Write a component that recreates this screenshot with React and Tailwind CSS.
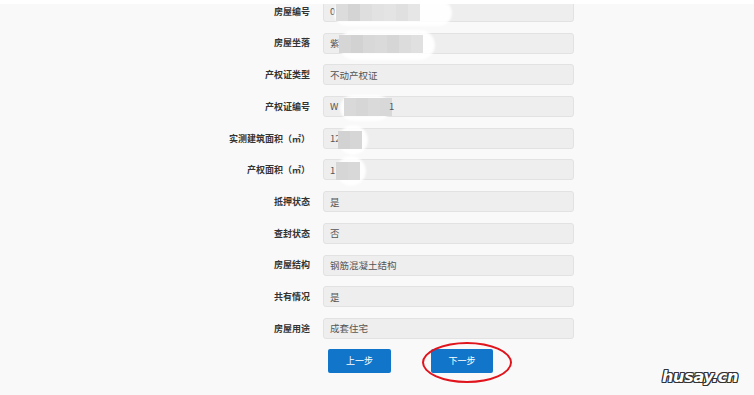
import React from 'react';

const cjk = { fontFamily: '"Noto Sans CJK SC", "Noto Sans", sans-serif' };

// grey mosaic used for blurred-out values
const Mosaic = ({ left, top, cells, blob }) => (
  <>
    {blob && (
      <span
        className="absolute rounded-full bg-white/90 blur-[1px]"
        style={{ left: blob[0], top: blob[1], width: blob[2], height: blob[3] }}
      />
    )}
    <span className="absolute flex" style={{ left, top }}>
      {cells.map((c, i) => (
        <span key={i} className="h-[18px] w-[12px]" style={{ background: c }} />
      ))}
    </span>
  </>
);

const rows = [
  {
    label: '房屋编号',
    value: '0',
    mosaic: { left: 12, top: 1, cells: ['#dcdcdc', '#d4d4d4', '#dedede', '#e2e2e2', '#e4e4e4', '#e0e0e0', '#e6e6e6'], blob: [10, -2, 118, 26] },
  },
  {
    label: '房屋坐落',
    value: '紫',
    mosaic: { left: 15, top: 1, cells: ['#d6d6d6', '#d2d2d2', '#d8d8d8', '#dadada', '#d6d6d6', '#dcdcdc', '#e0e0e0'], blob: [15, -4, 96, 30] },
  },
  { label: '产权证类型', value: '不动产权证' },
  {
    label: '产权证编号',
    value: 'W',
    tail: '1',
    mosaic: { left: 20, top: 1, cells: ['#d9d9d9', '#d6d6d6', '#dadada', '#d8d8d8'], blob: [16, -2, 50, 26] },
  },
  {
    label: '实测建筑面积（㎡）',
    value: '12',
    mosaic: { left: 14, top: 2, cells: ['#d2d2d2', '#d6d6d6'], blob: [14, -4, 30, 30] },
  },
  {
    label: '产权面积（㎡）',
    value: '1',
    mosaic: { left: 12, top: 2, cells: ['#d6d6d6', '#d8d8d8'], blob: [12, -4, 30, 30] },
  },
  { label: '抵押状态', value: '是' },
  { label: '查封状态', value: '否' },
  { label: '房屋结构', value: '钢筋混凝土结构' },
  { label: '共有情况', value: '是' },
  { label: '房屋用途', value: '成套住宅' },
];

export default function App() {
  return (
    <div className="relative h-[395px] w-[754px] overflow-hidden bg-[#f9f9f9]" style={cjk}>
      {/* white strip at the top of the crop */}
      <div className="absolute left-0 right-0 top-0 z-10 h-[4px] bg-white" />

      <div className="flex flex-col gap-[10.7px] pt-[1px]">
        {rows.map((r) => (
          <div key={r.label} className="flex h-[21px] items-center">
            <div className="w-[310px] text-right text-[9px] font-bold text-[#333]">{r.label}</div>
            <div className="relative ml-[13px] flex h-[21px] w-[251px] items-center rounded-[3px] border border-[#e2e2e2] bg-[#eeeeee] pl-[6px] text-[9.5px] text-[#555]">
              <span>{r.value}</span>
              {r.mosaic && <Mosaic {...r.mosaic} />}
              {r.tail && <span className="absolute left-[65px]">{r.tail}</span>}
            </div>
          </div>
        ))}
      </div>

      <div className="mt-[10px] flex items-start gap-[40px] pl-[328px]">
        <button className="h-[24px] w-[63px] rounded-[2px] bg-[#1176c9] text-[9px] text-white">上一步</button>
        <div className="relative flex">
          <button className="h-[24px] w-[62px] rounded-[2px] bg-[#1176c9] text-[9px] text-white">下一步</button>
          <span className="pointer-events-none absolute left-[-9px] top-[-7px] h-[41px] w-[90px] rounded-[50%] border-2 border-[#e0141c]" />
        </div>
      </div>

      {/* watermark */}
      <div
        className="absolute left-[662px] top-[365px] text-[16px] font-extrabold italic tracking-[-0.3px] text-white"
        style={{
          fontFamily: '"DejaVu Sans", sans-serif',
          textShadow:
            '1px 0 #333, -1px 0 #333, 0 1px #333, 0 -1px #333, 1px 1px #333, -1px -1px #333, 1px -1px #333, -1px 1px #333',
        }}
      >
        husay.cn
      </div>
    </div>
  );
}
